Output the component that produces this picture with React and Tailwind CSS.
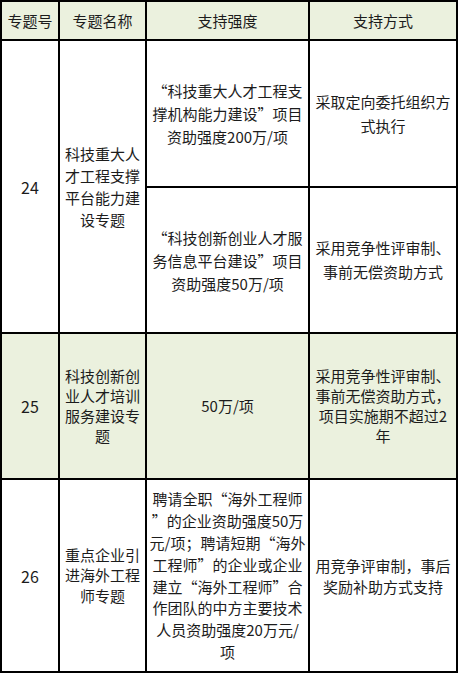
const GREEN = 'bg-[#ebf1de]'

function Cell({ lines, className = '', lh = 'leading-[22px]', green }) {
  return (
    <div
      className={`flex flex-col items-center justify-center text-center ${lh} ${
        green ? GREEN : 'bg-white'
      } ${className}`}
    >
      {lines.map((l, i) => (
        <span key={i} className="block whitespace-nowrap">
          {l}
        </span>
      ))}
    </div>
  )
}

export default function App() {
  return (
    <div className="min-h-[675px] bg-white">
      <div
        className="inline-grid grid-cols-[56px_85px_161px_146px] grid-rows-[37px_145px_144px_144px_191px] gap-[2px] bg-black p-[2px] text-[15px] text-[#1c1c1c]"
        style={{ fontFamily: '"Microsoft YaHei", "Noto Sans CJK SC", "Noto Sans", sans-serif' }}
      >
        {/* header */}
        <Cell green lines={['专题号']} />
        <Cell green lines={['专题名称']} />
        <Cell green lines={['支持强度']} />
        <Cell green lines={['支持方式']} />

        {/* 24 */}
        <Cell className="row-span-2 text-[16px]" lines={['24']} />
        <Cell
          className="row-span-2"
          lh="leading-[22px]"
          lines={['科技重大人', '才工程支撑', '平台能力建', '设专题']}
        />
        <Cell
          lh="leading-[23px]"
          lines={['“科技重大人才工程支', '撑机构能力建设”项目', '资助强度200万/项']}
        />
        <Cell lh="leading-[24px]" lines={['采取定向委托组织方', '式执行']} />
        <Cell
          lh="leading-[23px]"
          lines={['“科技创新创业人才服', '务信息平台建设”项目', '资助强度50万/项']}
        />
        <Cell lh="leading-[24px]" lines={['采用竞争性评审制、', '事前无偿资助方式']} />

        {/* 25 */}
        <Cell green className="text-[16px]" lines={['25']} />
        <Cell
          green
          lh="leading-[20px]"
          lines={['科技创新创', '业人才培训', '服务建设专', '题']}
        />
        <Cell green lines={['50万/项']} />
        <Cell
          green
          lh="leading-[20px]"
          lines={['采用竞争性评审制、', '事前无偿资助方式，', '项目实施期不超过2', '年']}
        />

        {/* 26 */}
        <Cell className="text-[16px]" lines={['26']} />
        <Cell lh="leading-[20.5px]" lines={['重点企业引', '进海外工程', '师专题']} />
        <Cell
          lh="leading-[21.8px]"
          lines={[
            '聘请全职“海外工程师',
            '”的企业资助强度50万',
            '元/项；聘请短期“海外',
            '工程师”的企业或企业',
            '建立“海外工程师”合',
            '作团队的中方主要技术',
            '人员资助强度20万元/',
            '项',
          ]}
        />
        <Cell lh="leading-[21px]" lines={['用竞争评审制，事后', '奖励补助方式支持']} />
      </div>
    </div>
  )
}
